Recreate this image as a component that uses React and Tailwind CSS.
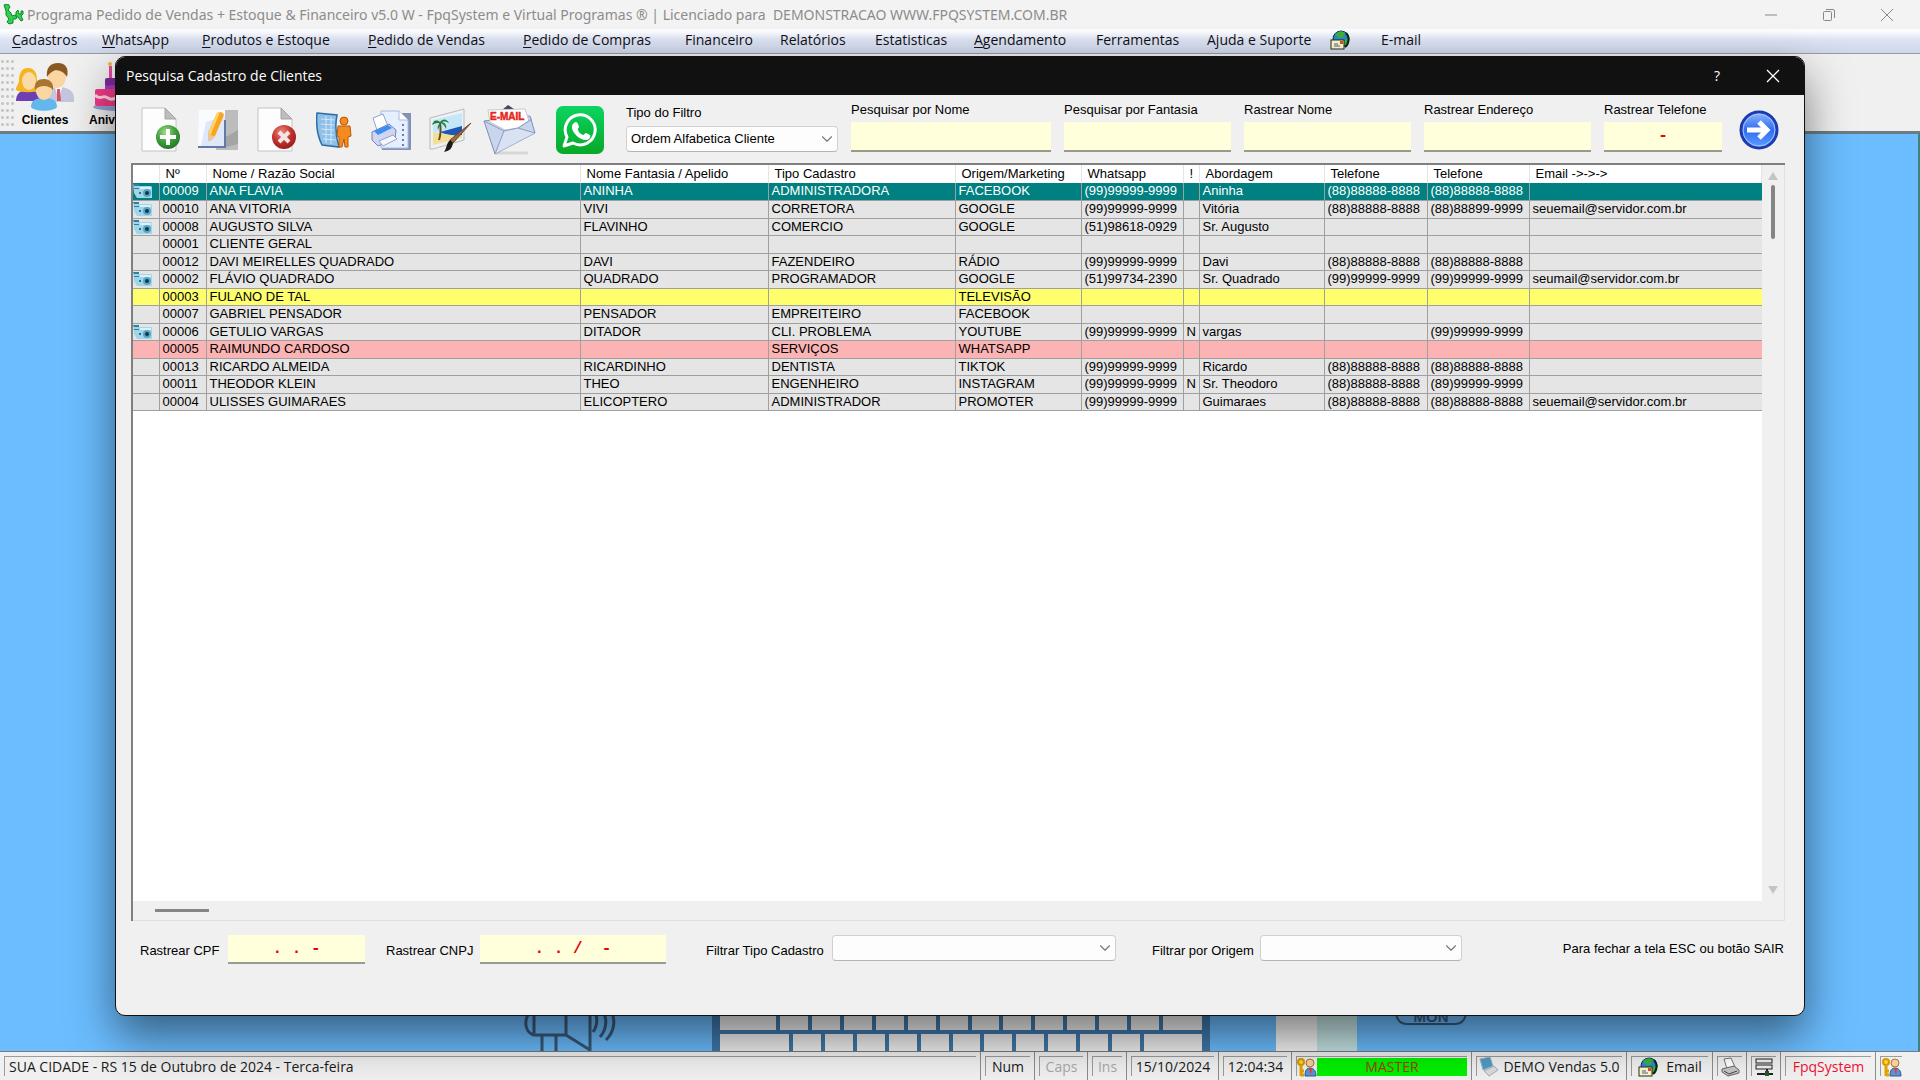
import React, { useState } from "react";
import { ChevronDown } from "lucide-react";

const menuItems = [
  { label: "Cadastros", hot: true, width: "w-[90px]" },
  { label: "WhatsApp", hot: true, width: "w-[100px]" },
  { label: "Produtos e Estoque", hot: true, width: "w-[166px]" },
  { label: "Pedido de Vendas", hot: true, width: "w-[155px]" },
  { label: "Pedido de Compras", hot: true, width: "w-[162px]" },
  { label: "Financeiro", width: "w-[95px]" },
  { label: "Relatórios", width: "w-[95px]" },
  { label: "Estatisticas", width: "w-[99px]" },
  { label: "Agendamento", hot: true, width: "w-[122px]" },
  { label: "Ferramentas", width: "w-[111px]" },
  { label: "Ajuda e Suporte", width: "w-[123px]" },
];

const columns = [
  { label: "", width: "w-[26px]" },
  { label: "Nº", width: "w-[47px]" },
  { label: "Nome / Razão Social", width: "w-[374px]" },
  { label: "Nome Fantasia / Apelido", width: "w-[188px]" },
  { label: "Tipo Cadastro", width: "w-[187px]" },
  { label: "Origem/Marketing", width: "w-[126px]" },
  { label: "Whatsapp", width: "w-[102px]" },
  { label: "!", width: "w-[16px]" },
  { label: "Abordagem", width: "w-[125px]" },
  { label: "Telefone", width: "w-[103px]" },
  { label: "Telefone", width: "w-[102px]" },
  { label: "Email ->->->", width: "" },
];

const clientes = [
  { foto: true, cells: ["00009", "ANA FLAVIA", "ANINHA", "ADMINISTRADORA", "FACEBOOK", "(99)99999-9999", "", "Aninha", "(88)88888-8888", "(88)88888-8888", ""] },
  { foto: true, cells: ["00010", "ANA VITORIA", "VIVI", "CORRETORA", "GOOGLE", "(99)99999-9999", "", "Vitória", "(88)88888-8888", "(88)88899-9999", "seuemail@servidor.com.br"] },
  { foto: true, cells: ["00008", "AUGUSTO SILVA", "FLAVINHO", "COMERCIO", "GOOGLE", "(51)98618-0929", "", "Sr. Augusto", "", "", ""] },
  { cells: ["00001", "CLIENTE GERAL", "", "", "", "", "", "", "", "", ""] },
  { cells: ["00012", "DAVI MEIRELLES QUADRADO", "DAVI", "FAZENDEIRO", "RÁDIO", "(99)99999-9999", "", "Davi", "(88)88888-8888", "(88)88888-8888", ""] },
  { foto: true, cells: ["00002", "FLÁVIO QUADRADO", "QUADRADO", "PROGRAMADOR", "GOOGLE", "(51)99734-2390", "", "Sr. Quadrado", "(99)99999-9999", "(99)99999-9999", "seumail@servidor.com.br"] },
  { color: "bg-[#ffff6e]", cells: ["00003", "FULANO DE TAL", "", "", "TELEVISÃO", "", "", "", "", "", ""] },
  { cells: ["00007", "GABRIEL PENSADOR", "PENSADOR", "EMPREITEIRO", "FACEBOOK", "", "", "", "", "", ""] },
  { foto: true, cells: ["00006", "GETULIO VARGAS", "DITADOR", "CLI. PROBLEMA", "YOUTUBE", "(99)99999-9999", "N", "vargas", "", "(99)99999-9999", ""] },
  { color: "bg-[#fcb3b3]", cells: ["00005", "RAIMUNDO CARDOSO", "", "SERVIÇOS", "WHATSAPP", "", "", "", "", "", ""] },
  { cells: ["00013", "RICARDO ALMEIDA", "RICARDINHO", "DENTISTA", "TIKTOK", "(99)99999-9999", "", "Ricardo", "(88)88888-8888", "(88)88888-8888", ""] },
  { cells: ["00011", "THEODOR KLEIN", "THEO", "ENGENHEIRO", "INSTAGRAM", "(99)99999-9999", "N", "Sr. Theodoro", "(88)88888-8888", "(89)99999-9999", ""] },
  { cells: ["00004", "ULISSES GUIMARAES", "ELICOPTERO", "ADMINISTRADOR", "PROMOTER", "(99)99999-9999", "", "Guimaraes", "(88)88888-8888", "(88)88888-8888", "seuemail@servidor.com.br"] },
];

/* ---------- Icons ---------- */

function AppLogo() {
  return (
    <svg viewBox="0 0 22 22" className="w-[22px] h-[22px]">
      <g stroke="#0b8a2a" strokeWidth="1" fill="#2fd04f">
        <path d="M2 1l4-1 2 3-2 3 3 3 1 3 3-1 2 1-1 3-3 0 0 4-4 1-2-2 2-3-3-4 0-4z" />
        <path d="M14 8l2-2 1 4 2 0 0-3 2 0 0 3-2 2 2 4-2 1-3-4-2 0z" />
      </g>
    </svg>
  );
}

function ClientesIcon() {
  return (
    <svg viewBox="0 0 60 50" className="w-[60px] h-[50px]">
      <path d="M1 39c0-8 5-11 12-11s12 3 12 11z" fill="#6d3fb0" />
      <path d="M13 6c-8 0-9 8-9 13-1 5-4 7-3 9 5 3 19 3 23 0 0-3-2-5-2-10 0-6-2-12-9-12z" fill="#f5b521" />
      <ellipse cx="14" cy="19" rx="7" ry="9" fill="#fbd9a8" />
      <path d="M33 40V31c1-4 5-6 10-6 10 0 16 4 16 11v4z" fill="#c3c6dc" />
      <path d="M40 25l4 15 3-15z" fill="#fff" />
      <path d="M42 27h3l1 12h-4z" fill="#d6546a" />
      <ellipse cx="42" cy="15" rx="9" ry="11" fill="#fbd5a2" />
      <path d="M32 15c-1-9 3-14 11-14s11 6 9 14c-3-5-6-6-11-7-4 1-6 3-9 7z" fill="#8a5a22" />
      <path d="M16 45c0-7 5-9 13-9s13 2 13 9c-3 5-23 5-26 0z" fill="#63b7ec" />
      <ellipse cx="29" cy="29" rx="8" ry="9" fill="#fbd5a2" />
      <path d="M20 28c-1-8 3-11 9-11s10 4 9 11c-3-3-5-4-9-4-4 0-6 1-9 4z" fill="#a87432" />
    </svg>
  );
}

function BoloIcon() {
  return (
    <svg viewBox="0 0 60 50" className="w-[60px] h-[50px] shrink-0">
      <ellipse cx="30" cy="45" rx="29" ry="4" fill="#8fa3d8" />
      <rect x="17" y="4" width="3" height="13" fill="#e8489a" />
      <rect x="24" y="4" width="3" height="13" fill="#e8489a" />
      <rect x="31" y="4" width="3" height="13" fill="#e8489a" />
      <circle cx="18" cy="2" r="2" fill="#f3b43c" />
      <circle cx="25" cy="2" r="2" fill="#f3b43c" />
      <rect x="13" y="16" width="34" height="12" rx="2" fill="#7d2a9c" />
      <path d="M13 22c4 5 6-2 10 2s6-2 10 1 8-2 14-1v4H13z" fill="#a63cc4" />
      <rect x="3" y="27" width="54" height="17" rx="2" fill="#f23a86" />
      <path d="M3 33c5 6 8-1 13 3s8-3 13 1 8-2 13 0 9-3 15-2" fill="none" stroke="#ffd6ea" strokeWidth="3" />
    </svg>
  );
}

function PageIcon({ kind }) {
  const id = kind === "add" ? "gAdd" : "gDel";
  return (
    <svg viewBox="0 0 40 46" className="w-10 h-[46px]">
      <defs>
        <radialGradient id={id} cx="0.4" cy="0.3" r="0.8">
          <stop offset="0" stopColor={kind === "add" ? "#a5dc8c" : "#ee8a80"} />
          <stop offset="0.5" stopColor={kind === "add" ? "#3f9f3a" : "#c3322e"} />
          <stop offset="1" stopColor={kind === "add" ? "#1f6e26" : "#8c1717"} />
        </radialGradient>
      </defs>
      <path d="M1 1h23l11 11v32H1z" fill="#fdfdfd" stroke="#c4c4c4" />
      <path d="M24 1l11 11H24z" fill="#bdbdbd" stroke="#a5a5a5" />
      <circle cx="27" cy="30" r="12" fill={`url(#${id})`} />
      {kind === "add" ? (
        <path d="M27 22v16M19 30h16" stroke="#fff" strokeWidth="4" />
      ) : (
        <path d="M22 25l10 10M32 25l-10 10" stroke="#f4e4e4" strokeWidth="4" />
      )}
    </svg>
  );
}

function EditIcon() {
  return (
    <svg viewBox="0 0 40 40" className="w-10 h-10">
      <path d="M18 0h22v40H18z" fill="#bcbcbc" />
      <path d="M26 28l14-8v14l-12 3z" fill="#a4a4a4" />
      <path d="M1 0h26v38H0z" fill="#fafbff" />
      <path d="M8 12l19-6v30H3z" fill="#dfe7fb" />
      <path d="M28 10v28H0v-2h26V10z" fill="#6478a6" />
      <path d="M19 3c3-2 6-1 7 2l-9 21-5 5-2-1 0-7z" fill="#f9a51c" />
      <path d="M19 3l3-1-9 22-3 0z" fill="#ffd66b" />
      <path d="M10 23l7 4-5 4-2 0z" fill="#e9c79a" />
    </svg>
  );
}

function PessoasIcon() {
  return (
    <svg viewBox="0 0 36 38" className="w-9 h-[38px]">
      <path d="M1 2l20 2c-2 10-1 22 2 32L6 34C1 24 0 12 1 2z" fill="#8fc0e8" stroke="#2f6ea6" strokeWidth="1.5" />
      <path d="M5 8l14 1M5 13l13 1M5 18l13 1M6 23l12 1M7 28l13 1M10 5v27M15 6v27" stroke="#cfe6f8" strokeWidth="1" />
      <circle cx="28" cy="10" r="4" fill="#f58a1f" stroke="#b55a08" />
      <path d="M22 15h12l1 10-3 1v10h-3l-1-8-2 8h-3V26l-2-1z" fill="#f58a1f" stroke="#b55a08" />
    </svg>
  );
}

function PrintIcon() {
  return (
    <svg viewBox="0 0 40 40" className="w-10 h-10">
      <path d="M11 3h29v37H11z" fill="#8493b5" />
      <path d="M10 1h18l9 9v28H10z" fill="#e6efff" stroke="#a9bbdd" />
      <path d="M28 1v9h9" fill="#fff" stroke="#a9bbdd" />
      <path d="M32 14v22" stroke="#46598a" strokeWidth="1.5" strokeDasharray="2 3" />
      <path d="M2 8l10-4 5 12-11 4z" fill="#fff" stroke="#93a3cb" />
      <path d="M1 22l17-8 7 6-1 9-17 7-6-6z" fill="#cfd6f2" stroke="#7382b8" />
      <path d="M3 21l14-6 4 3-14 7z" fill="#3d8ef0" />
      <path d="M8 31l14-6 4 4-14 7z" fill="#f4f6ff" stroke="#93a3cb" />
    </svg>
  );
}

function PinturaIcon() {
  return (
    <svg viewBox="0 0 46 48" className="w-[46px] h-12">
      <path d="M2 12l34-9v31L5 43H2z" fill="#eef1f3" stroke="#b5bcc0" />
      <path d="M5 14l29-7v14L5 27z" fill="#c5e8f8" />
      <path d="M12 26l22-6v9c-7 2-14 1-22-3z" fill="#1f58b8" />
      <path d="M5 27c10-1 18 4 29 2v3L5 39z" fill="#f2df96" />
      <path d="M11 34c2-6 2-11 1-17" stroke="#6b4a21" strokeWidth="2" fill="none" />
      <path d="M12 16c-4-3-7-1-8 3 3-2 5-2 8-2-2 2-3 4-2 7 1-3 2-5 3-7 2 1 4 3 5 6 1-4-1-6-4-7 3-1 5 0 7 1-2-4-6-5-9-1z" fill="#1f7d3a" />
      <path d="M43 17L25 37l-3-3z" fill="#a06a3e" stroke="#6b4526" />
      <path d="M22 34l3 3c-1 6-4 8-9 9 3-4 2-8 6-12z" fill="#1b1b1b" />
    </svg>
  );
}

function EmailIcon() {
  return (
    <svg viewBox="0 0 54 50" className="w-[54px] h-[50px]">
      <path d="M13 48h32" stroke="#d7d7d7" strokeWidth="3" />
      <path d="M19 5l6-5 6 4z" fill="#3d4a66" />
      <path d="M1 16L47 11l5 17-40 21z" fill="#c9d5ec" stroke="#7d8fb5" />
      <path d="M5 5l37-1 4 12-11 7-13 2L7 17z" fill="#fff" stroke="#c2c8d6" />
      <path d="M12 49l9-23 14-3 17 5z" fill="#dfe7f6" opacity="0.7" />
      <path d="M1 16l20 10 14-3L49 14" fill="none" stroke="#8b9cc0" />
      <path d="M12 49l9-23M52 28L35 23" stroke="#8b9cc0" fill="none" />
      <text x="7" y="15" fontSize="10" fontWeight="900" fill="#e8261c" stroke="#e8261c" strokeWidth="0.5" fontFamily="Liberation Sans, sans-serif">
        E-MAIL
      </text>
    </svg>
  );
}

function WhatsIcon() {
  return (
    <svg viewBox="0 0 48 48" className="w-12 h-12">
      <defs>
        <linearGradient id="gWhats" x1="0" y1="0" x2="0" y2="1">
          <stop offset="0" stopColor="#0bd463" />
          <stop offset="1" stopColor="#07a827" />
        </linearGradient>
      </defs>
      <rect width="48" height="48" rx="7" fill="url(#gWhats)" />
      <path d="M8 40l3-9a15 15 0 1 1 6 6z" fill="none" stroke="#fff" strokeWidth="3" strokeLinejoin="round" />
      <path d="M18 17c2-2 3-1 4 1l1 3c0 1-2 2-1 3 1 3 3 4 5 5 1 0 2-2 3-2l4 2c1 1 0 4-3 5-6 1-14-6-15-12 0-2 0-4 2-5z" fill="#fff" />
    </svg>
  );
}

function SetaIcon() {
  return (
    <svg viewBox="0 0 40 40" className="w-10 h-10">
      <defs>
        <linearGradient id="gSeta" x1="0" y1="0" x2="0" y2="1">
          <stop offset="0" stopColor="#8fb8ff" />
          <stop offset="0.5" stopColor="#2f6cf0" />
          <stop offset="1" stopColor="#5fa0ff" />
        </linearGradient>
      </defs>
      <circle cx="20" cy="20" r="18" fill="url(#gSeta)" stroke="#1d3bb0" strokeWidth="3" />
      <circle cx="20" cy="20" r="16" fill="none" stroke="#a9c8ff" strokeWidth="1" />
      <path d="M8 20h20M20 12l8 8-8 8" fill="none" stroke="#fff" strokeWidth="5" />
    </svg>
  );
}

function GloboIcon() {
  return (
    <svg viewBox="0 0 20 20" className="w-5 h-5">
      <circle cx="11" cy="9" r="8" fill="#2489d6" stroke="#0c2c50" />
      <path d="M5 4c4-4 8-3 10-1l-2 5-5 0zM14 10l5-2c0 4-1 7-4 9z" fill="#3cae3f" />
      <path d="M16 3c4 4 3 11-1 14" fill="none" stroke="#10240f" strokeWidth="2" />
      <rect x="1" y="10" width="13" height="9" fill="#fff6c8" stroke="#2b2b1c" />
      <path d="M4 16h6M4 14h4" stroke="#47618f" />
      <rect x="10" y="11" width="3" height="3" fill="#d9502b" />
    </svg>
  );
}

function ChaveIcon() {
  return (
    <svg viewBox="0 0 20 20" className="w-5 h-5 shrink-0">
      <path d="M8 19c0-6 2-8 5-8s6 2 6 8z" fill="#5c92d6" stroke="#33568f" />
      <path d="M12 11h3l-1 7z" fill="#e0402c" />
      <circle cx="13" cy="6" r="4" fill="#f6cf9a" stroke="#a8742e" />
      <circle cx="4" cy="5" r="3" fill="#ffd23c" stroke="#d69a00" strokeWidth="2" />
      <path d="M4 8v11M4 14h3M4 18h3" stroke="#e0a200" strokeWidth="3" />
    </svg>
  );
}

function MicroIcon() {
  return (
    <svg viewBox="0 0 20 20" className="w-5 h-5">
      <path d="M1 2l10-2 3 9-10 4z" fill="#4f9ac4" stroke="#9fb3c2" />
      <path d="M5 14l10-5 4 4-9 6z" fill="#d7dce2" stroke="#a5acb5" />
    </svg>
  );
}

function ImpressoraIcon() {
  return (
    <svg viewBox="0 0 20 20" className="w-5 h-5">
      <path d="M4 2l7-1 4 9-8 2z" fill="#fff" stroke="#777" />
      <path d="M2 12l12-3 5 4v3l-11 3-6-4z" fill="#c5c5c5" stroke="#666" />
      <path d="M4 14l5 3 8-3" fill="none" stroke="#444" />
    </svg>
  );
}

function RedeIcon() {
  return (
    <svg viewBox="0 0 20 20" className="w-5 h-5">
      <rect x="2" y="2" width="16" height="4" fill="#eee" stroke="#222" />
      <rect x="2" y="8" width="16" height="4" fill="#eee" stroke="#222" />
      <path d="M13 12v4M3 17h16" stroke="#222" strokeWidth="2" />
      <path d="M11 14h4v5h-4z" fill="#1f5a2c" />
    </svg>
  );
}

function CameraIcon() {
  return (
    <svg viewBox="0 0 20 16" className="block w-5 h-4">
      <path d="M0 1h6v2h12l1 1v11H4L1 10z" fill="#9fd6ea" />
      <path d="M0 1h6v2H1zM1 5h5v1H1z" fill="#2f7fa3" />
      <path d="M7 4h11v2H7z" fill="#d9f1f8" />
      <circle cx="14" cy="10" r="4" fill="#5aa5c4" />
      <circle cx="14" cy="10" r="2" fill="#14384a" />
      <path d="M6 9h2v2H6z" fill="#2f6d8a" />
    </svg>
  );
}

/* ---------- Small pieces ---------- */

function SearchField({ id, label, width, value = "" }) {
  const [text, setText] = useState(value);
  return (
    <div className={`flex flex-col gap-1 ${width}`}>
      <label htmlFor={id} className="h-4 leading-4 whitespace-nowrap">{label}</label>
      <input
        id={id}
        value={text}
        onChange={(e) => setText(e.target.value)}
        className="h-[30px] w-full bg-[#ffffdc] border-b-2 border-[#9a9a8c] text-center text-red-600 font-bold text-base font-['Liberation_Mono',monospace] outline-none"
      />
    </div>
  );
}

function Combo({ id, width, options }) {
  return (
    <div className={`relative ${width}`}>
      <select
        id={id}
        className="block appearance-none h-[26px] w-full bg-[#fdfdfd] border border-[#d0d0d0] border-b-[#b4b4b4] rounded-sm pl-1 outline-none"
      >
        {options.map((opt) => (
          <option key={opt}>{opt}</option>
        ))}
      </select>
      <ChevronDown className="absolute right-0.5 top-1 w-[18px] h-[18px] text-[#777] pointer-events-none" strokeWidth={1.5} />
    </div>
  );
}

function StatusPanel({ children, className = "" }) {
  return (
    <div className={`flex items-stretch p-1 border-r border-r-[#8c8c8c] ${className}`}>
      <div className="flex flex-1 items-center justify-center border-t border-l border-[#9c9c9c] whitespace-nowrap">
        {children}
      </div>
    </div>
  );
}

/* ---------- Main window ---------- */

function TitleBar() {
  return (
    <header className="flex items-center h-[29px] bg-[#f3f3f3] pl-[2px] text-[#8c8c8c]">
      <AppLogo />
      <h1 className="ml-[3px] text-sm whitespace-pre font-['Noto_Sans',sans-serif]">
        {"Programa Pedido de Vendas + Estoque & Financeiro v5.0 W - FpqSystem e Virtual Programas ® | Licenciado para  DEMONSTRACAO WWW.FPQSYSTEM.COM.BR"}
      </h1>
      <div className="ml-auto mr-[26px] flex items-center gap-11">
        <button aria-label="Minimizar">
          <svg viewBox="0 0 14 14" className="w-[14px] h-[14px]"><path d="M1 7h12" stroke="#888" /></svg>
        </button>
        <button aria-label="Restaurar">
          <svg viewBox="0 0 14 14" className="w-[14px] h-[14px]" fill="none" stroke="#888">
            <rect x="1.5" y="3.5" width="8" height="9" rx="1" />
            <path d="M4 1.500h7q1.500 0 1.500 1.500v7" />
          </svg>
        </button>
        <button aria-label="Fechar">
          <svg viewBox="0 0 14 14" className="w-[14px] h-[14px]"><path d="M1 1l12 12M13 1L1 13" stroke="#888" /></svg>
        </button>
      </div>
    </header>
  );
}

function MenuBar() {
  return (
    <nav className="flex items-center h-[25px] pl-3 pb-[2px] text-sm text-[#101018] bg-linear-to-b from-[#fbfcff] from-10% via-[#dde3f2] via-45% to-[#ced6e9] border-b border-[#9a9aa4]">
      {menuItems.map((item) => (
        <button key={item.label} className={`text-left whitespace-nowrap ${item.width}`}>
          {item.hot ? <u className="underline-offset-2">{item.label[0]}</u> : item.label[0]}
          {item.label.slice(1)}
        </button>
      ))}
      <button className="flex items-center gap-[31px]">
        <GloboIcon />
        E-mail
      </button>
    </nav>
  );
}

function ToolBar() {
  return (
    <div className="flex h-[80px] bg-[#f0f0f0] border-b-3 border-[#6d7b84] font-bold text-xs text-black font-['Liberation_Sans',sans-serif]">
      {/* grip */}
      <div className="w-[14px] my-1 bg-[radial-gradient(circle,#c6c6c6_1px,transparent_2px)] bg-size-[5px_7px]" />
      <button className="flex flex-col items-center w-[62px] pt-2">
        <ClientesIcon />
        Clientes
      </button>
      <button className="flex flex-col items-center w-[76px] ml-2 pt-2">
        <BoloIcon />
        Aniversário
      </button>
    </div>
  );
}

function Desktop() {
  const topKeys = [56, 28, 28, 28, 28, 28, 28, 28, 28, 28, 28, 28, 28, 39];
  const lowKeys = [69, 28, 28, 28, 28, 28, 28, 28, 28, 28, 28, 28, 58];
  return (
    <main className="flex-1 flex items-end bg-[#6bbdff] border-r-2 border-[#3b8480] pl-[524px] overflow-hidden">
      {/* megaphone */}
      <svg viewBox="0 0 94 44" className="w-[94px] h-11 shrink-0" fill="none" stroke="#38597a" strokeWidth="3">
        <path d="M10 0v28h32V0M10 4c-11 3-11 21 0 24M18 28v16M32 28v16M42 28l24 15V0" />
        <path d="M69 2c5 6 5 16 0 23M77 2c7 8 6 20-1 28M86 2c6 10 5 22-4 31" />
      </svg>
      {/* keyboard */}
      <div className="ml-[94px] w-[498px] h-11 shrink-0 flex flex-col gap-1 bg-[#3f79ab] px-2">
        <div className="flex gap-1 h-[23px]">
          {topKeys.map((w, i) => (
            <div key={i} className="bg-[#f0f0f0]" style={{ flex: w }} />
          ))}
        </div>
        <div className="flex gap-1 flex-1">
          {lowKeys.map((w, i) => (
            <div key={i} className="bg-[#f0f0f0]" style={{ flex: w }} />
          ))}
        </div>
      </div>
      <div className="ml-[66px] w-[41px] h-11 shrink-0 bg-[#f4f4f4]" />
      <div className="w-10 h-11 shrink-0 bg-[#c4e4e4]" />
      <svg viewBox="0 0 72 44" className="ml-[38px] w-[72px] h-11 shrink-0" fill="none" stroke="#38597a" strokeWidth="2">
        <path d="M1 6c1 8 5 11 11 11h48c6 0 10-3 11-11" />
        <text x="36" y="15" textAnchor="middle" fontSize="15" fontWeight="bold" fill="#38597a" stroke="none" fontFamily="Liberation Sans, sans-serif">MON</text>
      </svg>
    </main>
  );
}

function StatusBar() {
  return (
    <footer className="flex h-[29px] bg-[#f0f0f0] border-t border-[#7a7a7a] text-sm text-[#1a1a1a]">
      <div className="flex flex-1 p-1 border-r border-[#8c8c8c]">
        <div className="flex flex-1 items-center pl-1 border-t border-l border-[#9c9c9c] whitespace-nowrap">
          SUA CIDADE - RS 15 de Outubro de 2024 - Terca-feira
        </div>
      </div>
      <StatusPanel className="w-[54px]">Num</StatusPanel>
      <StatusPanel className="w-[53px] text-[#a8a8a8]">Caps</StatusPanel>
      <StatusPanel className="w-[39px] text-[#a8a8a8]">Ins</StatusPanel>
      <StatusPanel className="w-[92px]">15/10/2024</StatusPanel>
      <StatusPanel className="w-[73px]">12:04:34</StatusPanel>
      <StatusPanel className="w-[180px]">
        <ChaveIcon />
        <span className="flex-1 h-[18px] leading-[18px] text-center bg-[#00f000] text-[#a04000]">MASTER</span>
      </StatusPanel>
      <StatusPanel className="w-[155px]">
        <MicroIcon />
        <span className="ml-1">DEMO Vendas 5.0</span>
      </StatusPanel>
      <StatusPanel className="w-[86px]">
        <GloboIcon />
        <span className="ml-2">Email</span>
      </StatusPanel>
      <StatusPanel className="w-[34px]"><ImpressoraIcon /></StatusPanel>
      <StatusPanel className="w-[34px]"><RedeIcon /></StatusPanel>
      <StatusPanel className="w-[95px] text-[#f01030]">FpqSystem</StatusPanel>
      <StatusPanel className="w-[30px] border-r-0"><ChaveIcon /></StatusPanel>
      <div className="w-[14px]" />
    </footer>
  );
}

/* ---------- Dialog ---------- */

function ClientesGrid() {
  const [selected, setSelected] = useState(0);

  return (
    <div className="flex-1 flex flex-col border-t-2 border-l-2 border-[#808080] min-h-0">
      <div className="flex flex-1 min-h-0 border-r border-[#e0e0e0]">
        <div className="flex-1 bg-white overflow-hidden">
          <table className="w-full table-fixed border-collapse whitespace-nowrap">
            <colgroup>
              {columns.map((col, i) => (
                <col key={i} className={col.width} />
              ))}
            </colgroup>
            <thead>
              <tr className="h-[18px]">
                {columns.map((col, i) => (
                  <th key={i} className="p-0 pl-[6px] h-[18px] leading-[18px] text-left font-normal border-r border-[#e4e4e4]">
                    {col.label}
                  </th>
                ))}
              </tr>
            </thead>
            <tbody>
              {clientes.map((cli, i) => {
                const active = i === selected;
                const bg = active ? "bg-[#008080] text-white" : cli.color || "bg-[#e5e5e5]";
                return (
                  <tr key={cli.cells[0]} onClick={() => setSelected(i)} className={`h-[17px] even:h-[18px] ${bg}`}>
                    <td className="p-0 border-r border-b border-[#a0a0a0]">{cli.foto && <CameraIcon />}</td>
                    {cli.cells.map((cell, j) => (
                      <td key={j} className="p-0 pl-[3px] leading-4 border-r border-b border-[#a0a0a0] last:border-r-0">
                        {cell}
                      </td>
                    ))}
                  </tr>
                );
              })}
            </tbody>
          </table>
        </div>
        {/* vertical scrollbar */}
        <div className="w-[22px] flex flex-col items-center bg-[#f0f0f0] pt-[7px] pb-[7px]">
          <svg viewBox="0 0 10 8" className="w-[10px] h-2"><path d="M5 0l5 8H0z" fill="#c4c4c4" /></svg>
          <div className="mt-[5px] w-1 h-[54px] rounded bg-[#858585]" />
          <svg viewBox="0 0 10 8" className="mt-auto w-[10px] h-2"><path d="M5 8l5-8H0z" fill="#c4c4c4" /></svg>
        </div>
      </div>
      {/* horizontal scrollbar */}
      <div className="flex items-center h-5 pl-[22px] border-r border-b border-[#e0e0e0]">
        <div className="w-[54px] h-[3px] bg-[#858585]" />
      </div>
    </div>
  );
}

function PesquisaDialog() {
  return (
    <section
      role="dialog"
      aria-label="Pesquisa Cadastro de Clientes"
      className="absolute left-[115px] right-[115px] top-14 bottom-16 flex flex-col bg-[#f0f0f0] border border-[#111] rounded-[10px] overflow-hidden shadow-[0_20px_45px_rgba(0,0,0,0.5)] text-[13px] text-black font-['Liberation_Sans',sans-serif]"
    >
      <div className="flex items-center h-[38px] shrink-0 bg-[#111] text-white pl-[10px] pr-6 font-['Open_Sans',sans-serif]">
        <h2 className="text-sm">Pesquisa Cadastro de Clientes</h2>
        <button className="ml-auto text-sm" aria-label="Ajuda">?</button>
        <button className="ml-[46px]" aria-label="Fechar">
          <svg viewBox="0 0 14 14" className="w-[14px] h-[14px]"><path d="M1 1l12 12M13 1L1 13" stroke="#fff" strokeWidth="1.300" /></svg>
        </button>
      </div>

      <div className="flex h-[68px] shrink-0 pl-[25px] pr-[25px]">
        <div className="flex items-center pr-[22px] pt-[2px]">
          <button aria-label="Incluir" className="w-[57px]"><PageIcon kind="add" /></button>
          <button aria-label="Alterar" className="w-[59px]"><EditIcon /></button>
          <button aria-label="Excluir" className="w-[59px]"><PageIcon kind="del" /></button>
          <button aria-label="Contatos" className="w-[55px]"><PessoasIcon /></button>
          <button aria-label="Imprimir" className="w-[57px]"><PrintIcon /></button>
          <button aria-label="Imagem" className="w-[55px]"><PinturaIcon /></button>
          <button aria-label="E-mail" className="w-[73px]"><EmailIcon /></button>
          <button aria-label="WhatsApp"><WhatsIcon /></button>
        </div>

        <div className="flex flex-col gap-[5px] pt-[10px]">
          <label htmlFor="filtro" className="h-4 leading-4">Tipo do Filtro</label>
          <Combo id="filtro" width="w-[212px]" options={["Ordem Alfabetica Cliente", "Ordem Codigo"]} />
        </div>

        <div className="flex flex-1 gap-[13px] pl-[13px] pt-[7px]">
          <SearchField id="nome" label="Pesquisar por Nome" width="w-[200px]" />
          <SearchField id="fantasia" label="Pesquisar por Fantasia" width="w-[167px]" />
          <SearchField id="rnome" label="Rastrear Nome" width="w-[167px]" />
          <SearchField id="endereco" label="Rastrear Endereço" width="w-[167px]" />
          <SearchField id="telefone" label="Rastrear Telefone" width="w-[118px]" value="-" />
        </div>

        <button aria-label="Sair" className="self-center pt-[2px]"><SetaIcon /></button>
      </div>

      <div className="flex-1 flex min-h-0 pl-[15px] pr-[19px]">
        <ClientesGrid />
      </div>

      <div className="flex h-[94px] shrink-0 items-start pl-6 pr-5 pt-[14px]">
        <label htmlFor="cpf" className="w-[88px] mt-[6px]">Rastrear CPF</label>
        <input id="cpf" defaultValue=". . -" className="w-[137px] h-[29px] bg-[#ffffdc] border-b-2 border-[#9a9a9a] text-center text-red-600 font-bold text-base font-['Liberation_Mono',monospace] outline-none" />
        <label htmlFor="cnpj" className="w-[94px] mt-[6px] ml-[21px]">Rastrear CNPJ</label>
        <input id="cnpj" defaultValue=". . /  -" className="w-[186px] h-[29px] bg-[#ffffdc] border-b-2 border-[#9a9a9a] text-center text-red-600 font-bold text-base font-['Liberation_Mono',monospace] outline-none" />
        <label htmlFor="tipo" className="w-[126px] mt-[6px] ml-10">Filtrar Tipo Cadastro</label>
        <Combo id="tipo" width="w-[284px]" options={[""]} />
        <label htmlFor="origem" className="w-[108px] mt-[6px] ml-9">Filtrar por Origem</label>
        <Combo id="origem" width="w-[202px]" options={[""]} />
        <p className="ml-auto mt-1">Para fechar a tela ESC ou botão SAIR</p>
      </div>
    </section>
  );
}

export default function App() {
  return (
    <div className="relative flex flex-col h-screen overflow-hidden font-['Open_Sans',sans-serif]">
      <TitleBar />
      <MenuBar />
      <ToolBar />
      <Desktop />
      <StatusBar />
      <PesquisaDialog />
    </div>
  );
}
